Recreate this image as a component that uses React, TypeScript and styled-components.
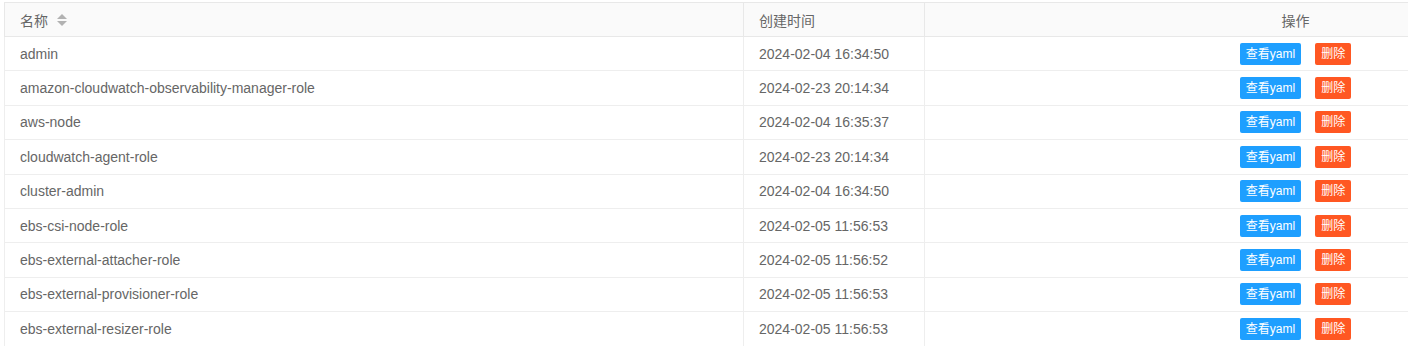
import { ReactElement } from 'react';
import styled, { createGlobalStyle } from 'styled-components';

const roles = [
  { name: 'admin', createdAt: '2024-02-04 16:34:50' },
  {
    name: 'amazon-cloudwatch-observability-manager-role',
    createdAt: '2024-02-23 20:14:34',
  },
  { name: 'aws-node', createdAt: '2024-02-04 16:35:37' },
  { name: 'cloudwatch-agent-role', createdAt: '2024-02-23 20:14:34' },
  { name: 'cluster-admin', createdAt: '2024-02-04 16:34:50' },
  { name: 'ebs-csi-node-role', createdAt: '2024-02-05 11:56:53' },
  { name: 'ebs-external-attacher-role', createdAt: '2024-02-05 11:56:52' },
  { name: 'ebs-external-provisioner-role', createdAt: '2024-02-05 11:56:53' },
  { name: 'ebs-external-resizer-role', createdAt: '2024-02-05 11:56:53' },
];

const GlobalStyle = createGlobalStyle`
  html, body {
    margin: 0;
    background: #fff;
    overflow: hidden;
  }
  body {
    font-family: "Liberation Sans", "Noto Sans CJK SC", Arial, sans-serif;
  }
`;

function SortIcon(): ReactElement {
  return (
    <SortIconStyled>
      <span className="up" />
      <span className="down" />
    </SortIconStyled>
  );
}

function App(): ReactElement {
  return (
    <>
      <GlobalStyle />
      <Page>
        <Table>
          <colgroup>
            <col style={{ width: 739 }} />
            <col style={{ width: 181 }} />
            <col style={{ width: 742 }} />
          </colgroup>
          <thead>
            <tr>
              <HeadCell>
                名称
                <SortIcon />
              </HeadCell>
              <HeadCell>创建时间</HeadCell>
              <HeadCell center>操作</HeadCell>
            </tr>
          </thead>
          <tbody>
            {roles.map((r) => (
              <tr key={r.name}>
                <Cell>{r.name}</Cell>
                <Cell>{r.createdAt}</Cell>
                <Cell center>
                  <Actions>
                    <Btn kind="normal">查看yaml</Btn>
                    <Btn kind="danger">删除</Btn>
                  </Actions>
                </Cell>
              </tr>
            ))}
          </tbody>
        </Table>
      </Page>
    </>
  );
}

const Page = styled.div`
  padding: 2px 0 0 4px;
  width: 100vw;
  box-sizing: border-box;
  overflow: hidden;
`;

const Table = styled.table`
  table-layout: fixed;
  width: 1662px;
  border-collapse: collapse;
  color: #666;
  font-size: 14px;
`;

const HeadCell = styled.th<{ center?: boolean }>`
  height: 34px;
  box-sizing: border-box;
  padding: 0 15px;
  background: #fafafa;
  border: 1px solid #e8e8e8;
  font-weight: normal;
  text-align: ${({ center }) => (center ? 'center' : 'left')};
  white-space: nowrap;
`;

const Cell = styled.td<{ center?: boolean }>`
  height: 34.4px;
  box-sizing: border-box;
  padding: 0 15px;
  border: 1px solid #eee;
  text-align: ${({ center }) => (center ? 'center' : 'left')};
  white-space: nowrap;
`;

const SortIconStyled = styled.span`
  display: inline-flex;
  flex-direction: column;
  gap: 2px;
  margin-left: 9px;
  vertical-align: middle;
  position: relative;
  top: -2px;

  span {
    width: 0;
    height: 0;
    border-left: 5px solid transparent;
    border-right: 5px solid transparent;
  }
  .up {
    border-bottom: 5px solid #b2b2b2;
  }
  .down {
    border-top: 5px solid #b2b2b2;
  }
`;

const Actions = styled.div`
  display: inline-flex;
  align-items: center;
  gap: 14px;
  vertical-align: middle;
`;

const Btn = styled.button<{ kind: 'normal' | 'danger' }>`
  height: 22px;
  padding: 0 6px;
  border: none;
  border-radius: 2px;
  font-family: inherit;
  font-size: 12px;
  line-height: 22px;
  color: #fff;
  cursor: pointer;
  background: ${({ kind }) => (kind === 'danger' ? '#ff5722' : '#1e9fff')};
`;

export default App;
